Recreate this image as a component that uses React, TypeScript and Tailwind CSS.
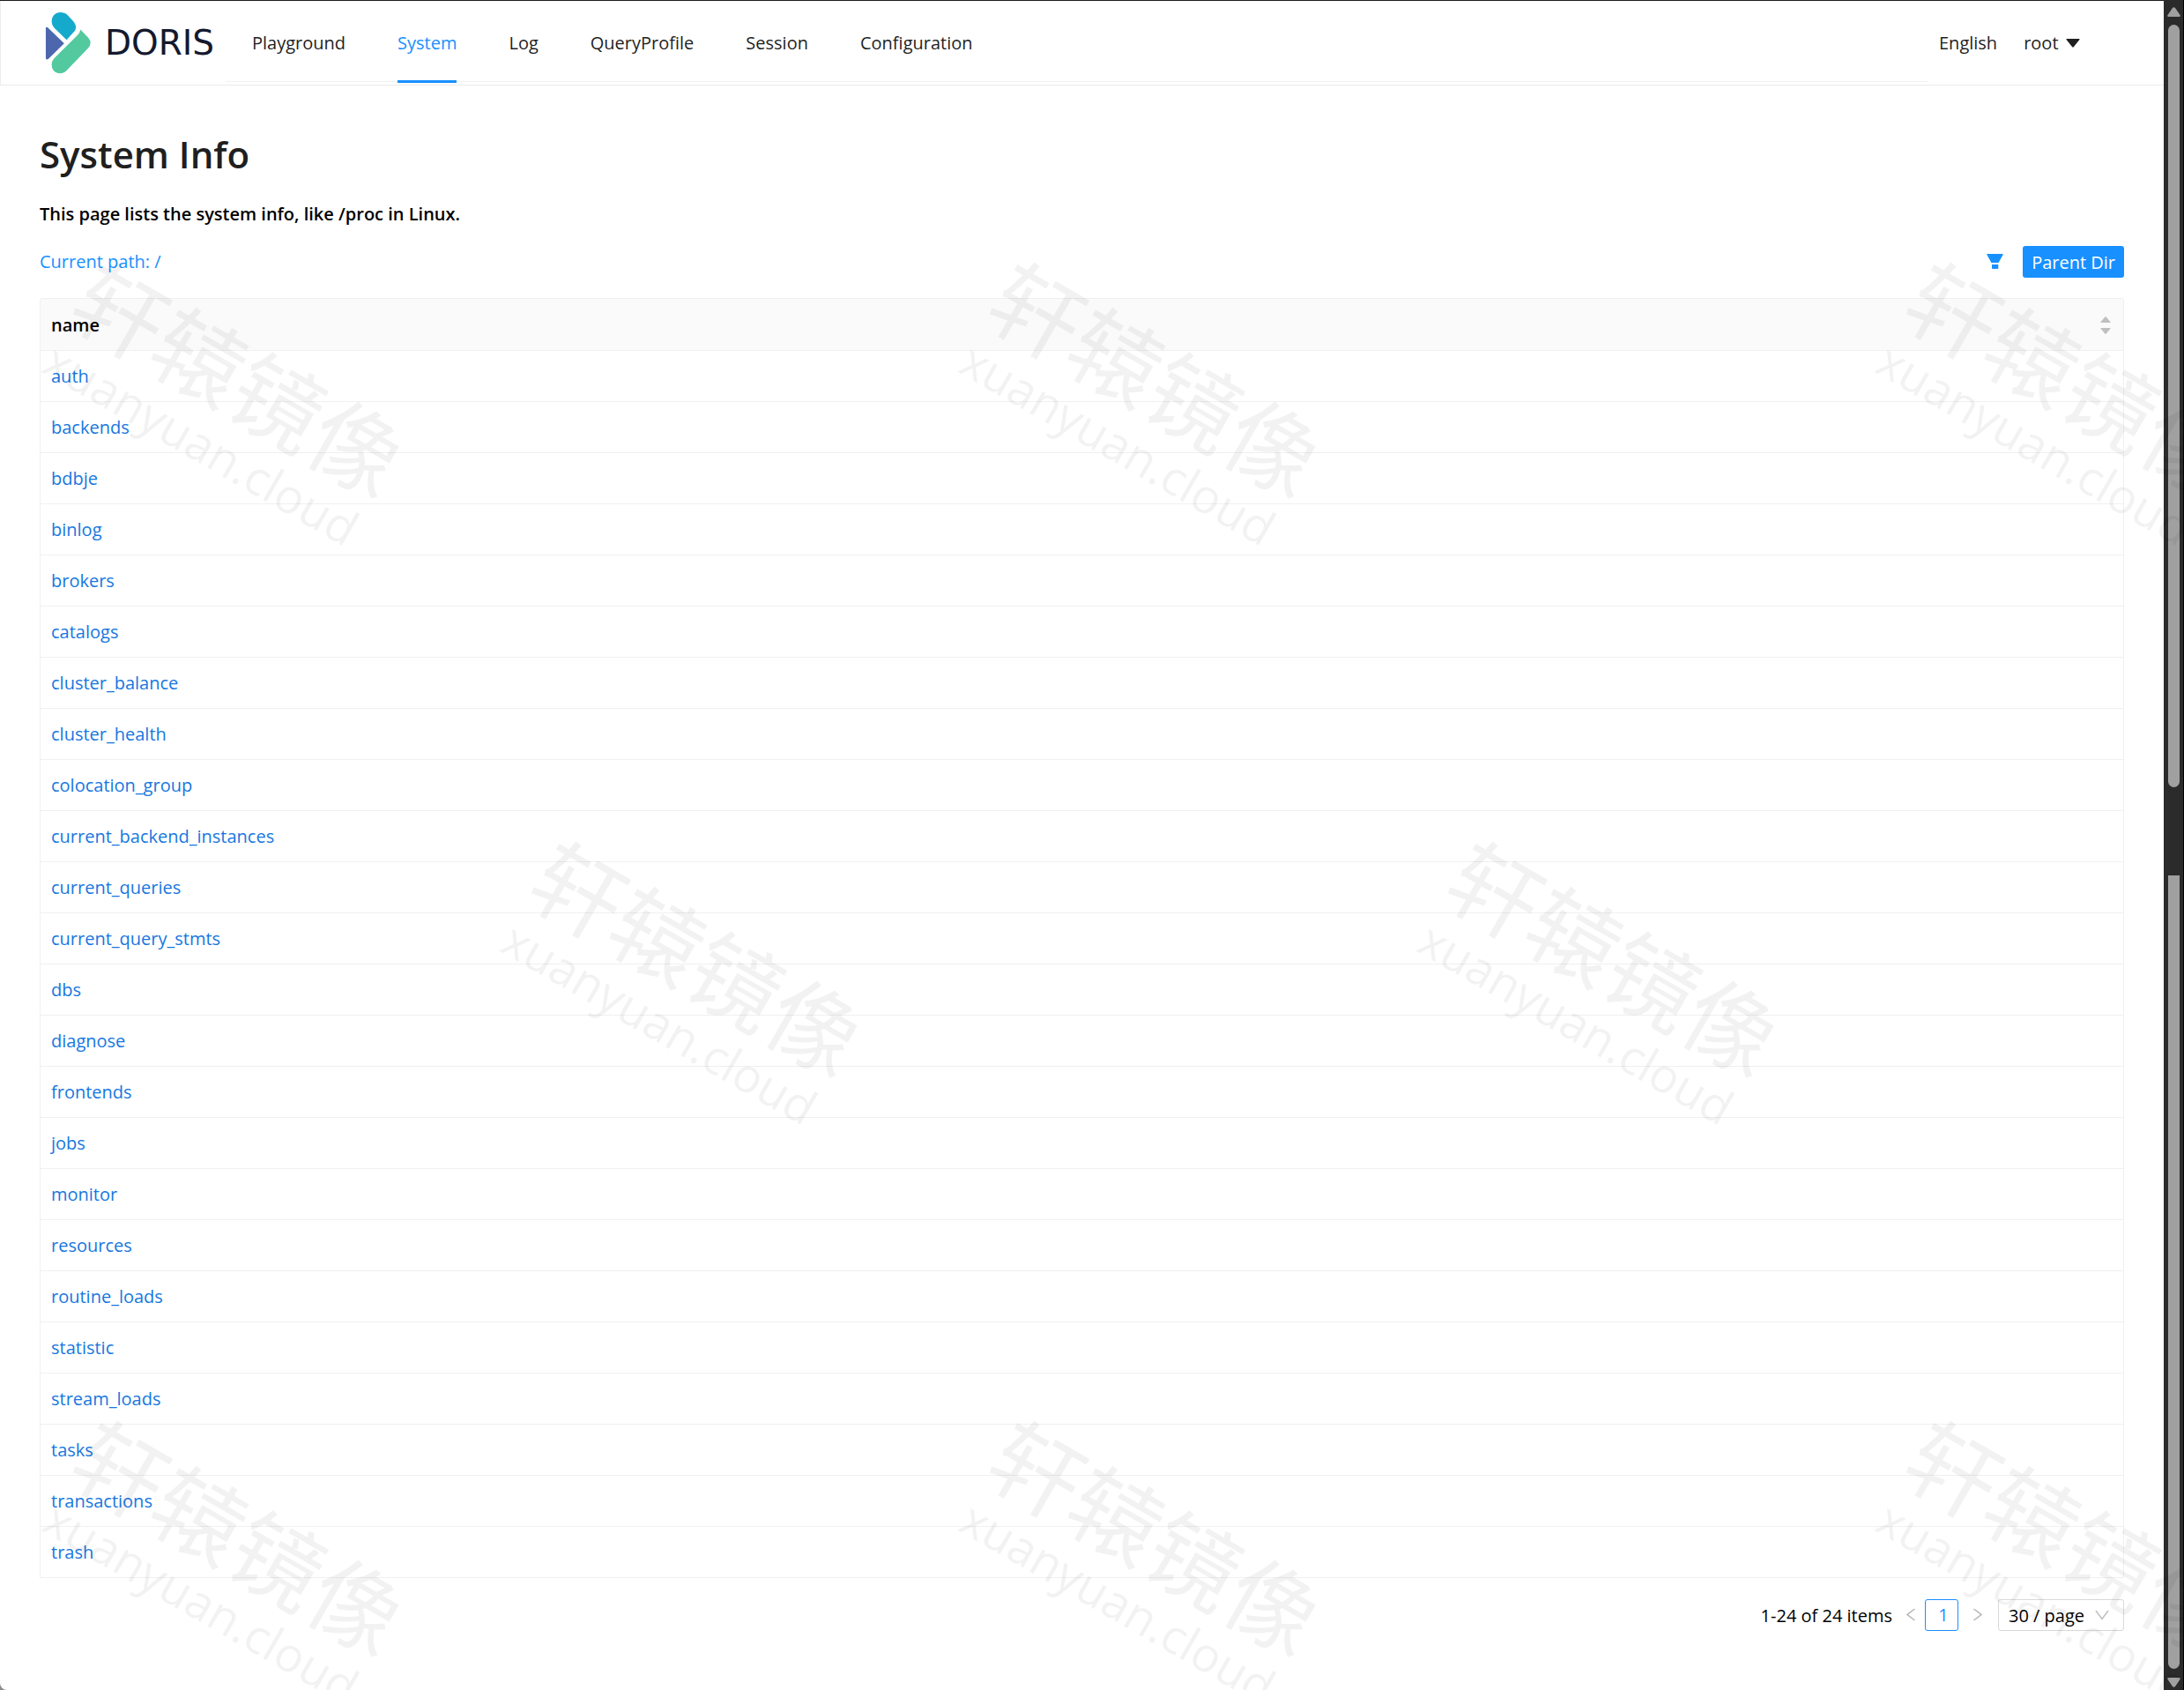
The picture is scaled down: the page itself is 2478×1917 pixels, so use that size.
import { clsx } from "clsx";

const NAV_ITEMS = [
  "Playground",
  "System",
  "Log",
  "QueryProfile",
  "Session",
  "Configuration",
];

const ENTRIES = [
  "auth",
  "backends",
  "bdbje",
  "binlog",
  "brokers",
  "catalogs",
  "cluster_balance",
  "cluster_health",
  "colocation_group",
  "current_backend_instances",
  "current_queries",
  "current_query_stmts",
  "dbs",
  "diagnose",
  "frontends",
  "jobs",
  "monitor",
  "resources",
  "routine_loads",
  "statistic",
  "stream_loads",
  "tasks",
  "transactions",
  "trash",
];

const WATERMARKS = [
  { x: 271, y: 430 },
  { x: 1311, y: 430 },
  { x: 2351, y: 430 },
  { x: 791, y: 1087 },
  { x: 1831, y: 1087 },
  { x: 271, y: 1744 },
  { x: 1311, y: 1744 },
  { x: 2351, y: 1744 },
];

export default function App() {
  return (
    <div className="relative flex min-h-screen overflow-hidden bg-[#8c8c8c] font-['Open_Sans','Noto_Sans_CJK_SC',sans-serif] text-xl leading-8 text-[#1f1f1f]">
      <div className="min-w-0 flex-1 rounded-bl-lg border-t border-[#1f1a1f] bg-white">
        <Header />
        <main className="px-[45px] pt-12">
          <h1 className="text-[42px] leading-[60px] font-semibold">
            System Info
          </h1>
          <p className="mt-[22px] font-semibold text-black">
            This page lists the system info, like /proc in Linux.
          </p>
          <Toolbar />
          <EntryTable />
          <Pagination />
        </main>
      </div>
      <Scrollbar />
      <Watermarks />
    </div>
  );
}

function Header() {
  return (
    <header className="flex h-24 items-stretch border-b border-l border-[#ececec]">
      <a href="#home" className="flex w-[255px] items-center pl-[49px]">
        <DorisLogo />
        <span className="ml-[14px] font-['DejaVu_Sans',sans-serif] text-[39px] leading-none text-[#14192e]">
          DORIS
        </span>
      </a>
      <nav className="mb-[3px] flex flex-1 gap-[59px] border-b border-[#f0f0f0] pl-[30px]">
        {NAV_ITEMS.map((item) => (
          <a
            key={item}
            href={`#${item}`}
            className={clsx(
              "-mb-[2px] flex items-center border-b-[3px] pt-[6px]",
              item === "System"
                ? "border-[#1890ff] text-[#1890ff]"
                : "border-transparent",
            )}
          >
            {item}
          </a>
        ))}
      </nav>
      <div className="flex w-[267px] items-center gap-[30px] pl-3">
        <button type="button">English</button>
        <button type="button" className="flex items-center gap-2">
          root
          <svg width="16" height="10" viewBox="0 0 16 10" fill="#1f1f1f">
            <path d="M1 0h14q1 0 .4.9L8.8 9.3q-.8.9-1.6 0L.6.9Q0 0 1 0z" />
          </svg>
        </button>
      </div>
    </header>
  );
}

function Toolbar() {
  return (
    <div className="mt-5 flex items-center justify-between">
      <p className="text-[#1890ff]">Current path: /</p>
      <div className="flex items-center gap-[22px]">
        <button type="button" aria-label="Filter">
          <svg width="19" height="18" viewBox="0 0 19 18" fill="#1890ff">
            <path d="M.8 0h17.4q.8 0 .5.8L13.6 10H5.4L.3.8Q0 0 .8 0zM6 12h7.3v4.3q0 .7-.7.7H6.700q-.7 0-.7-.7z" />
          </svg>
        </button>
        <button
          type="button"
          className="h-9 rounded-[3px] bg-[#1890ff] px-[10px] pt-[2px] text-white"
        >
          Parent Dir
        </button>
      </div>
    </div>
  );
}

function EntryTable() {
  return (
    <div className="mt-[23px] rounded-t-[3px] border border-b-0 border-[#f0f0f0]">
      <table className="w-full border-collapse text-left">
        <thead>
          <tr className="h-[58px] border-b border-[#f0f0f0] bg-[#fafafa]">
            <th className="pt-[2px] pr-[14px] pl-3 font-semibold text-black">
              <div className="flex items-center justify-between">
                name
                <button type="button" aria-label="Sort by name">
                  <SortIcon />
                </button>
              </div>
            </th>
          </tr>
        </thead>
        <tbody>
          {ENTRIES.map((entry) => (
            <tr key={entry} className="h-[58px] border-b border-[#f0f0f0]">
              <td className="px-3 pt-[2px]">
                <a href={`#${entry}`} className="text-[#1677e0]">
                  {entry}
                </a>
              </td>
            </tr>
          ))}
        </tbody>
      </table>
    </div>
  );
}

function Pagination() {
  return (
    <div className="mt-6 flex items-center justify-end text-black">
      <span className="pt-[2px]">1-24 of 24 items</span>
      <button type="button" aria-label="Previous page" className="ml-4">
        <Chevron d="M9.500 1 1 7.500 9.500 14" />
      </button>
      <button
        type="button"
        aria-current="page"
        className="ml-[10px] h-9 w-[38px] rounded-[3px] border border-[#1890ff] pl-1 text-[#1890ff]"
      >
        1
      </button>
      <button type="button" aria-label="Next page" className="ml-4">
        <Chevron d="M1.500 1 10 7.500 1.500 14" />
      </button>
      <div className="relative ml-[18px]">
        <select
          aria-label="Page size"
          className="h-9 w-[143px] appearance-none rounded-[3px] border border-[#d9d9d9] bg-white pt-[2px] pl-[11px] leading-8"
        >
          <option>30 / page</option>
        </select>
        <svg
          className="pointer-events-none absolute top-3 right-[17px]"
          width="16"
          height="12"
          viewBox="0 0 16 12"
          fill="none"
          stroke="#bfbfbf"
          strokeWidth="1.5"
        >
          <path d="m1 1 7 9.500L15 1" />
        </svg>
      </div>
    </div>
  );
}

function Scrollbar() {
  return (
    <div
      aria-hidden="true"
      className="flex w-[23px] flex-col items-center border-r border-black bg-[#2b2b2b] pt-2 pb-[3px]"
    >
      <svg width="15" height="11" viewBox="0 0 15 11" fill="#a0a0a0">
        <path d="M6 1q1.500-1.600 3 0l5.500 8q.8 2-1 2h-12q-1.800 0-1-2z" />
      </svg>
      <div className="mt-[9px] w-[13px] flex-[865] rounded-full bg-[#a0a0a0]" />
      <div className="w-[13px] flex-[100]" />
      <div className="w-[13px] flex-[900] rounded-b-full bg-[#a0a0a0]" />
      <svg
        className="mt-[10px]"
        width="15"
        height="11"
        viewBox="0 0 15 11"
        fill="#a0a0a0"
      >
        <path d="M6 10q1.500 1.600 3 0l5.500-8q.8-2-1-2h-12Q-.3 0 .5 2z" />
      </svg>
    </div>
  );
}

function Watermarks() {
  return (
    <div
      aria-hidden="true"
      className="pointer-events-none absolute inset-0 overflow-hidden"
    >
      {WATERMARKS.map(({ x, y }) => (
        <div
          key={`${x}-${y}`}
          className="absolute flex h-0 w-0 rotate-30 flex-col items-center whitespace-nowrap text-black/5"
          style={{ left: x, top: y }}
        >
          <span className="-mt-[54px] text-[103px] leading-[108px]">
            轩辕镜像
          </span>
          <span className="text-[54px] leading-[60px]">xuanyuan.cloud</span>
        </div>
      ))}
    </div>
  );
}

function DorisLogo() {
  return (
    <svg
      width="55"
      height="72"
      viewBox="125 38 140 215"
      preserveAspectRatio="none"
    >
      <title>Doris</title>
      <path
        fill="#15a9cb"
        d="M147 72C147 38 178 34 192 49L208 69C220 84 218 98 212 106L190 134 154 93Q147 84 147 72z"
      />
      <path
        fill="#4c67ad"
        d="M130 95Q130 89 135 92L183 146 137 199Q130 203 130 196z"
      />
      <path
        fill="#53c9a0"
        d="M230 99 252 126Q266 144 252 163L190 238C176 255 147 250 147 218Q147 206 154 197L222 118Q229 109 230 99z"
      />
    </svg>
  );
}

function SortIcon() {
  return (
    <svg width="12" height="20" viewBox="0 0 12 20" fill="#bfbfbf">
      <path d="M5.300.6q.7-.7 1.400 0l4.800 5.700q.4.700-.4.700H.9q-.8 0-.4-.7zM5.300 19.400q.7.700 1.400 0l4.800-5.700q.4-.7-.4-.7H.9q-.8 0-.4.700z" />
    </svg>
  );
}

function Chevron({ d }: { d: string }) {
  return (
    <svg
      width="11"
      height="15"
      viewBox="0 0 11 15"
      fill="none"
      stroke="#b5b5b5"
      strokeWidth="1.5"
    >
      <path d={d} />
    </svg>
  );
}
